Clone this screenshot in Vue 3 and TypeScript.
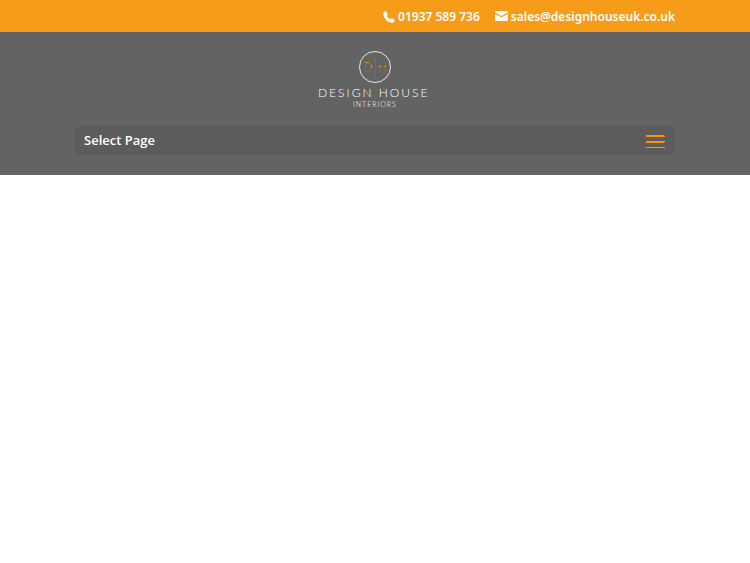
<script setup lang="ts">
import { ref } from 'vue'

const phone: string = '01937 589 736'
const email: string = 'sales@designhouseuk.co.uk'
const menuOpen = ref<boolean>(false)
</script>

<template>
  <div class="page">
    <div class="top-bar">
      <div class="container contact">
        <a class="contact-link" href="tel:01937589736">
          <svg class="icon-phone" viewBox="0 0 12 12" aria-hidden="true">
            <path d="M2.4.3 C1 .8.2 1.9.4 3.3 C.9 7.600 4.400 11.200 8.500 11.700 C9.900 11.800 11.100 11.200 11.600 9.900 C11.800 9.400 11.600 9 11.200 8.700 L9.300 7.500 C8.800 7.200 8.300 7.300 7.900 7.700 L7.200 8.400 C5.700 7.700 4.400 6.300 3.700 4.800 L4.300 4.200 C4.700 3.800 4.800 3.300 4.500 2.800 L3.500.8 C3.300.3 2.900.1 2.400.3 Z" />
          </svg>
          <span>{{ phone }}</span>
        </a>
        <a class="contact-link" :href="`mailto:${email}`">
          <svg class="icon-mail" viewBox="0 0 13 10" aria-hidden="true">
            <path d="M1 0 H12 Q13 0 13 1 V1.600 L6.500 5 L0 1.600 V1 Q0 0 1 0 Z" />
            <path d="M0 3 L6.500 6.300 L13 3 V9 Q13 10 12 10 H1 Q0 10 0 9 Z" />
          </svg>
          <span>{{ email }}</span>
        </a>
      </div>
    </div>

    <header class="main-header">
      <div class="container">
        <a class="logo" href="/" aria-label="Design House Interiors">
          <svg class="logo-art" viewBox="0 0 116 60">
            <circle class="ring" cx="58" cy="17" r="15.500" />
            <g class="mono">
              <path d="M48.500 12.500 H50 Q54.500 12.500 54.500 17 Q54.500 21.500 50 21.500 H48.500 Z M62.500 12 V22 M68.500 12 V22 M62 16.500 H68" />
              <path d="M58.500 7 V27" />
            </g>
            <path class="glint" d="M48 12.500 H52 M54.500 15 V18 M62 16.500 H64 M67 16.500 H69" />
            <text class="name" x="1" y="47">DESIGN HOUSE</text>
            <text class="sub" x="36" y="57">INTERIORS</text>
          </svg>
        </a>
        <button class="mobile-nav" type="button" :aria-expanded="menuOpen" @click="menuOpen = !menuOpen">
          <span>Select Page</span>
          <svg class="bars" viewBox="0 0 19 14" aria-hidden="true">
            <path d="M0 0 H18 V1 H19 V2 H0 Z M0 6 H19 V7 H18 V8 H0 Z M0 12 H19 V13 H0 Z" />
          </svg>
        </button>
      </div>
    </header>
  </div>
</template>

<style>
body {
  background: #fff;
}
</style>

<style scoped>
.page {
  font-family: "Noto Sans", "Open Sans", sans-serif;
  font-weight: 600;
  color: #fff;
}

.container {
  width: 80%;
  margin: 0 auto;
}

.top-bar {
  background: #f79c18;
}

.contact {
  display: flex;
  justify-content: flex-end;
  gap: 15px;
  padding-top: 2px;
  font-size: 12px;
  line-height: 30px;
}

.contact-link {
  display: flex;
  align-items: center;
  gap: 3px;
  color: inherit;
  text-decoration: none;
  white-space: nowrap;
}

.icon-phone {
  width: 12px;
  height: 12px;
  fill: #fff;
}

.icon-mail {
  width: 13px;
  height: 10px;
  margin-bottom: 2px;
  fill: #fff;
}

.main-header {
  padding: 18px 0 20px;
  background: #636363;
}

.logo {
  display: block;
  width: 116px;
  margin: 0 auto 16px;
}

.logo-art {
  display: block;
  width: 116px;
  height: 60px;
}

.ring {
  fill: none;
  stroke: #e4e4e4;
  stroke-width: 1;
}

.mono {
  fill: none;
  stroke: #8a6a3c;
  stroke-width: 1;
}

.glint {
  fill: none;
  stroke: #f79708;
  stroke-width: 1;
}

.name,
.sub {
  font-family: Lato, "Liberation Sans", sans-serif;
  font-weight: 300;
  fill: #fff;
}

.name {
  font-size: 12px;
  letter-spacing: 2px;
}

.sub {
  font-size: 7px;
  letter-spacing: 1px;
}

.mobile-nav {
  display: flex;
  align-items: center;
  justify-content: space-between;
  width: 100%;
  padding: 5px 10px 5px 9px;
  border: 0;
  border-radius: 5px;
  background: #5c5c5c;
  color: inherit;
  font-family: "Open Sans", "Noto Sans", sans-serif;
  font-size: 13px;
  font-weight: 600;
  line-height: 19px;
  cursor: pointer;
}

.bars {
  width: 19px;
  height: 14px;
  margin-top: 3px;
  fill: #f79708;
}
</style>
